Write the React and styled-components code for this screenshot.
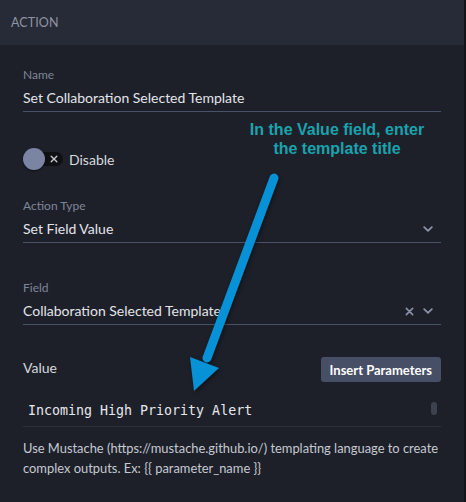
import React from "react";
import styled, { createGlobalStyle } from "styled-components";

const GlobalStyle = createGlobalStyle`
  html, body { margin: 0; padding: 0; background: #1e2029; }
  body { font-family: Lato, "Noto Sans", sans-serif; }
`;

const Panel = styled.div`
  position: relative;
  width: 464px;
  min-height: 502px;
  background: #1e2029;
  border-right: 2px solid #121419;
  overflow: hidden;
`;

const Header = styled.div`
  height: 45px;
  background: #272b37;
  display: flex;
  align-items: center;
  padding-left: 11px;
  font-size: 12.5px;
  color: #8e94a3;
  letter-spacing: 0.1px;
`;

const Content = styled.div`
  padding: 22px 23px 0 23px;
  display: flex;
  flex-direction: column;
`;

const Field = styled.div`
  display: flex;
  flex-direction: column;
  margin-top: ${(p) => p.$mt || 0}px;
`;

const Label = styled.div`
  font-size: 12px;
  line-height: 16px;
  color: #7e869a;
`;

const InputLine = styled.div`
  display: flex;
  align-items: center;
  padding: 5px 0 3px;
  line-height: 20px;
  font-size: 14px;
  color: #e2e5ea;
  border-bottom: 1px solid #4a5268;
`;

const InputText = styled.span`
  flex: 1;
  white-space: nowrap;
`;

const Icons = styled.span`
  display: flex;
  align-items: center;
  gap: 9px;
  padding-right: 8px;
  color: #8a92a8;
`;

const ToggleRow = styled.div`
  margin-top: 36px;
  display: flex;
  align-items: center;
  height: 22px;
`;

const Switch = styled.div`
  position: relative;
  width: 40px;
  height: 22px;
  display: flex;
  align-items: center;
`;

const Track = styled.div`
  margin-left: 7px;
  width: 33px;
  height: 14px;
  border-radius: 7px;
  background: #0f1014;
  display: flex;
  align-items: center;
  justify-content: flex-end;
  padding-right: 5px;
  box-sizing: border-box;
  color: #c3c7cf;
`;

const Knob = styled.div`
  position: absolute;
  left: 0;
  top: 0;
  width: 22px;
  height: 22px;
  border-radius: 50%;
  background: #7a85a3;
  box-shadow: 0 1px 2px rgba(0, 0, 0, 0.5);
`;

const ToggleLabel = styled.span`
  margin-left: 6px;
  font-size: 14px;
  color: #d6d9df;
`;

const ValueHeader = styled.div`
  margin-top: 32px;
  display: flex;
  justify-content: space-between;
  align-items: flex-start;
`;

const ValueLabel = styled.div`
  padding-top: 1px;
  font-size: 14px;
  line-height: 20px;
  color: #d6d9df;
`;

const Button = styled.button`
  height: 25px;
  padding: 0 9px;
  border: none;
  border-radius: 3px;
  background: #474f66;
  color: #ffffff;
  font-family: Lato, "Noto Sans", sans-serif;
  font-weight: 700;
  font-size: 13px;
  cursor: pointer;
`;

const CodeBox = styled.div`
  position: relative;
  margin-top: 20px;
  padding: 0 0 6px 5px;
  border-bottom: 1px solid #2c303b;
`;

const CodeText = styled.div`
  font-family: "DejaVu Sans Mono", "Liberation Mono", monospace;
  font-size: 13.3px;
  line-height: 18px;
  color: #e6e8ec;
  white-space: pre;
`;

const ScrollThumb = styled.div`
  position: absolute;
  right: 4px;
  top: 0;
  width: 6px;
  height: 13px;
  border-radius: 3px;
  background: #3c4250;
`;

const Help = styled.p`
  margin: 11px 0 0;
  font-size: 12.9px;
  line-height: 20px;
  color: #c5c9d2;
`;

const Note = styled.div`
  position: absolute;
  left: 237px;
  top: 120px;
  width: 200px;
  text-align: center;
  font-family: "Liberation Sans", Arial, sans-serif;
  font-weight: 700;
  font-size: 16px;
  line-height: 19px;
  color: #19a3ae;
`;

const ArrowSvg = styled.svg`
  position: absolute;
  left: 0;
  top: 0;
  pointer-events: none;
  filter: drop-shadow(1px 2px 2px rgba(0, 0, 0, 0.45));
`;

const Chevron = () => (
  <svg width="10" height="6" viewBox="0 0 10 6">
    <path d="M1.2 1.2L5 4.8L8.8 1.2" fill="none" stroke="currentColor" strokeWidth="1.8" strokeLinecap="round" strokeLinejoin="round" />
  </svg>
);

const Cross = ({ size = 9, w = 1.8 }) => (
  <svg width={size} height={size} viewBox="0 0 10 10">
    <path d="M1.5 1.5L8.5 8.5M8.5 1.5L1.5 8.5" fill="none" stroke="currentColor" strokeWidth={w} strokeLinecap="round" />
  </svg>
);

export default function App() {
  return (
    <>
      <GlobalStyle />
      <Panel>
        <Header>ACTION</Header>
        <Content>
          <Field>
            <Label>Name</Label>
            <InputLine>
              <InputText>Set Collaboration Selected Template</InputText>
            </InputLine>
          </Field>

          <ToggleRow>
            <Switch>
              <Track>
                <Cross size={8} w={1.7} />
              </Track>
              <Knob />
            </Switch>
            <ToggleLabel>Disable</ToggleLabel>
          </ToggleRow>

          <Field $mt={28}>
            <Label>Action Type</Label>
            <InputLine>
              <InputText>Set Field Value</InputText>
              <Icons>
                <Chevron />
              </Icons>
            </InputLine>
          </Field>

          <Field $mt={37}>
            <Label>Field</Label>
            <InputLine>
              <InputText>Collaboration Selected Template</InputText>
              <Icons>
                <Cross />
                <Chevron />
              </Icons>
            </InputLine>
          </Field>

          <ValueHeader>
            <ValueLabel>Value</ValueLabel>
            <Button>Insert Parameters</Button>
          </ValueHeader>

          <CodeBox>
            <CodeText>Incoming High Priority Alert</CodeText>
            <ScrollThumb />
          </CodeBox>

          <Help>
            Use Mustache (https://mustache.github.io/) templating language to create complex outputs. Ex: {"{{ parameter_name }}"}
          </Help>
        </Content>

        <Note>
          In the Value field, enter
          <br />
          the template title
        </Note>

        <ArrowSvg width="464" height="502" viewBox="0 0 464 502">
          <line x1="274" y1="178" x2="207" y2="358" stroke="#0791d6" strokeWidth="9" strokeLinecap="round" />
          <polygon points="190,357 219,368 194,391" fill="#0791d6" />
        </ArrowSvg>
      </Panel>
    </>
  );
}
